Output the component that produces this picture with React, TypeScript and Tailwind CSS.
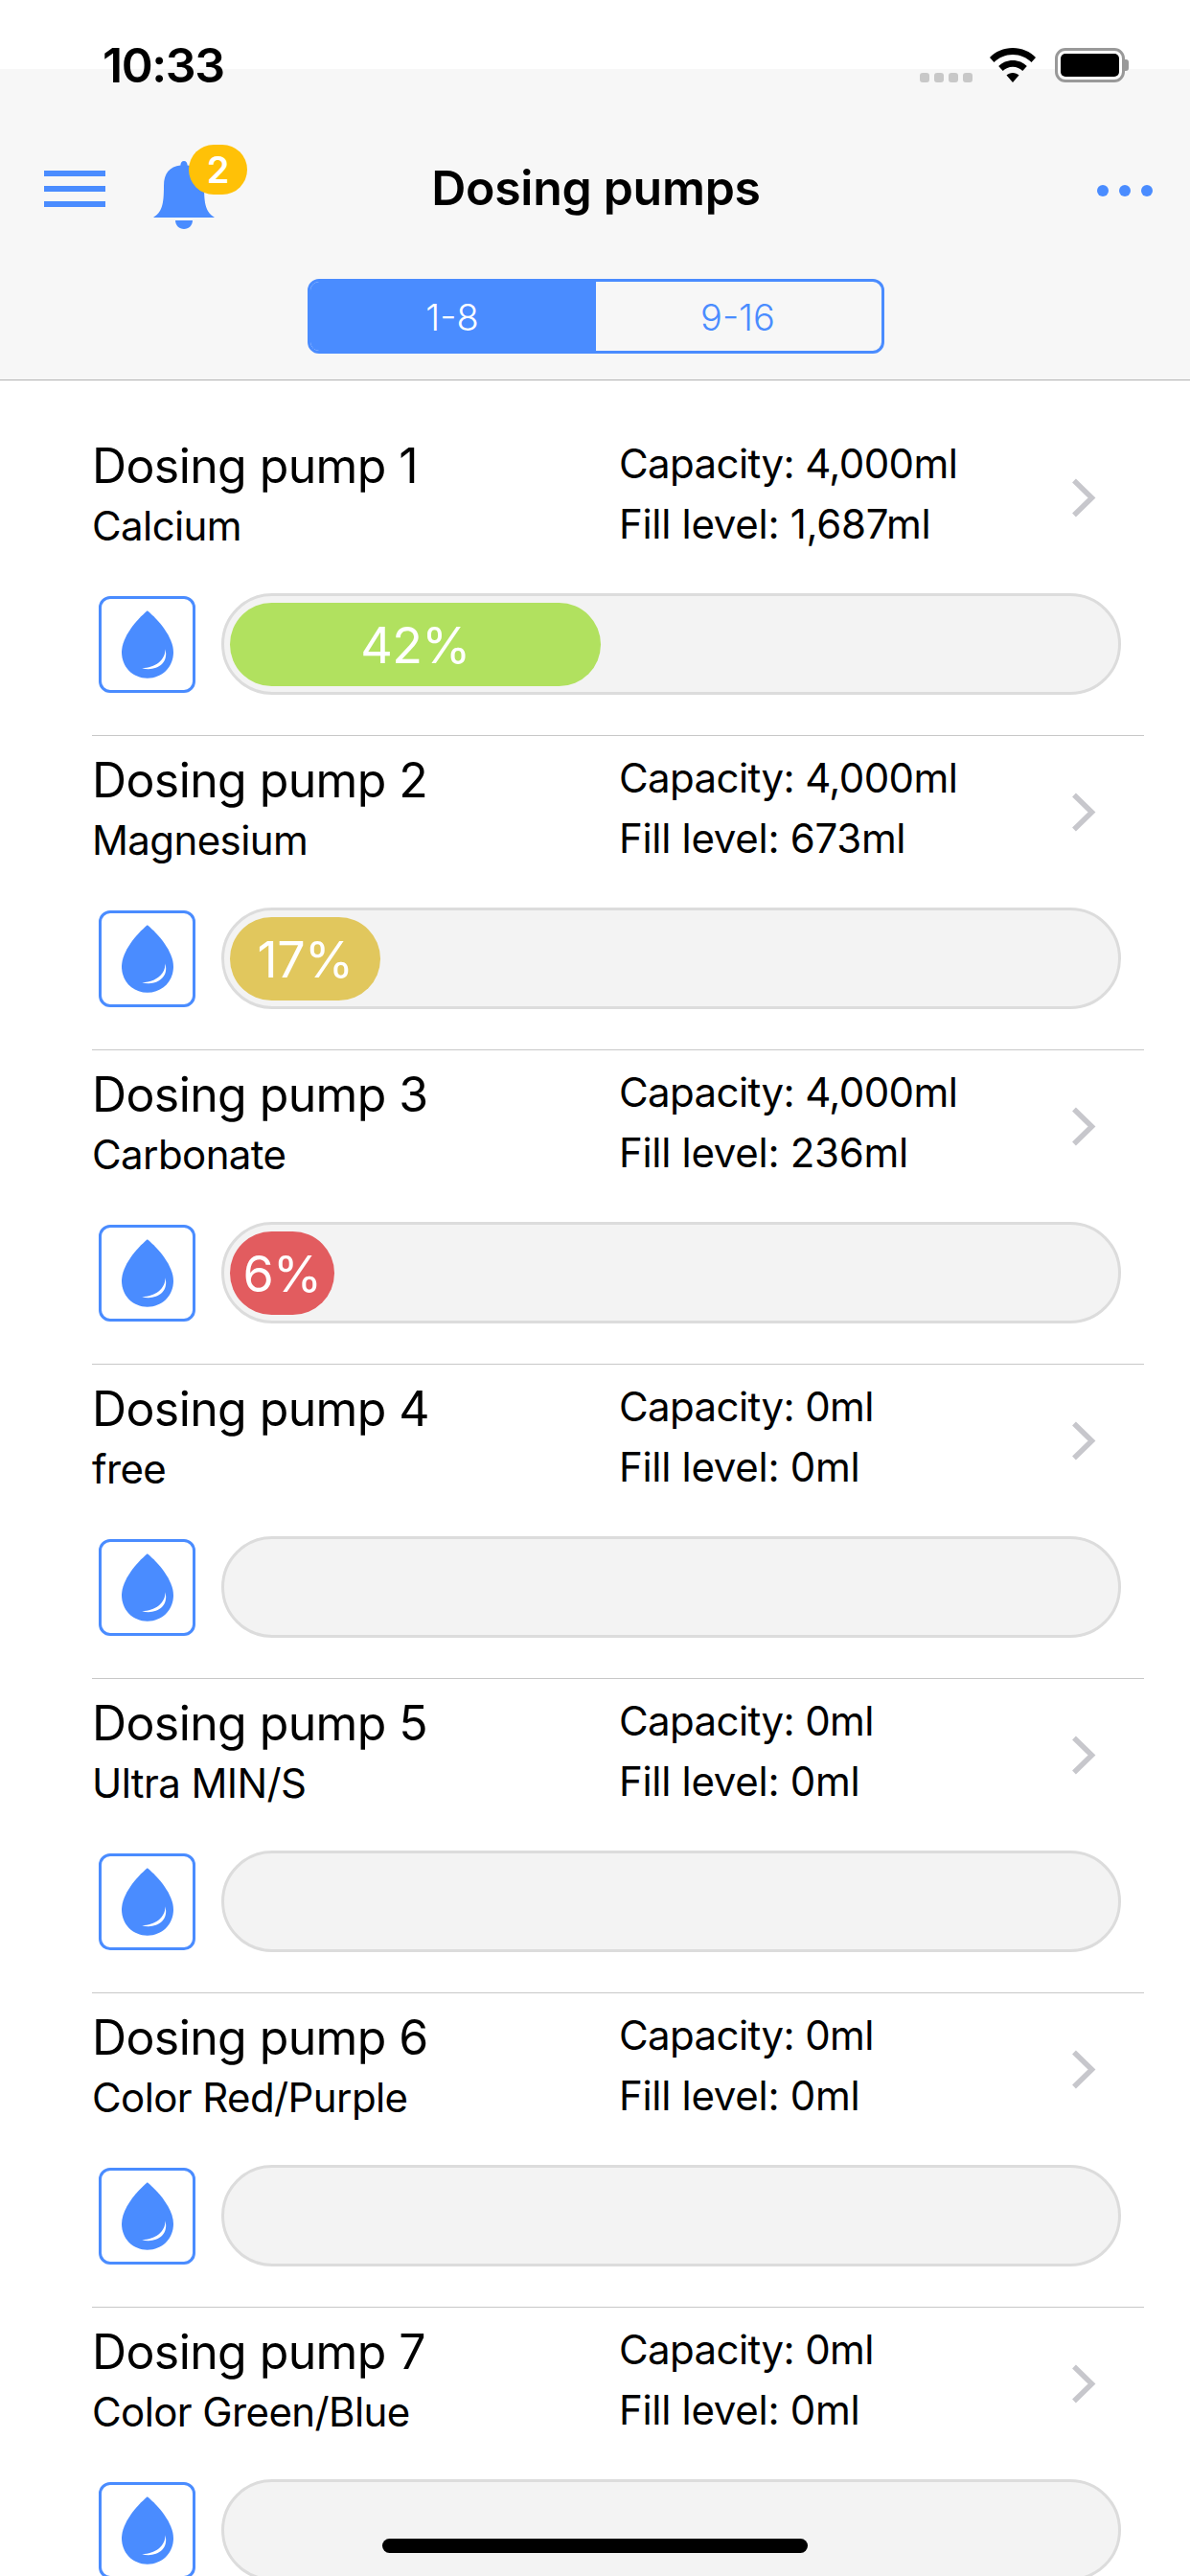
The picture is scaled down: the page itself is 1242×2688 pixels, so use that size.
import React from "react";

const pumps = [
  { n: 1, sub: "Calcium", cap: "4,000ml", fill: "1,687ml", pct: "42%", bar: "w-[387px] bg-[#b1e15f]" },
  { n: 2, sub: "Magnesium", cap: "4,000ml", fill: "673ml", pct: "17%", bar: "w-[157px] bg-[#e1c75d]" },
  { n: 3, sub: "Carbonate", cap: "4,000ml", fill: "236ml", pct: "6%", bar: "w-[109px] bg-[#e25c5f]" },
  { n: 4, sub: "free", cap: "0ml", fill: "0ml" },
  { n: 5, sub: "Ultra MIN/S", cap: "0ml", fill: "0ml" },
  { n: 6, sub: "Color Red/Purple", cap: "0ml", fill: "0ml" },
  { n: 7, sub: "Color Green/Blue", cap: "0ml", fill: "0ml" },
];

function Drop() {
  return (
    <svg width="54" height="71" viewBox="135 107 163 213">
      <path
        fill="#4a8cff"
        d="M216 107C250 135 298 190 298 238C298 285 262 320 216 320C170 320 135 285 135 238C135 190 182 135 216 107Z"
      />
      <path fill="#fff" d="M272 228C274 262 240 288 199 288C238 300 286 276 272 228Z" />
    </svg>
  );
}

function Bell() {
  return (
    <svg width="64" height="71" viewBox="0 0 64 71">
      <path
        fill="#4a8cff"
        d="M32 0C34.2 0 35.6 2 35.6 4.600C47 6 53 13 53 26C53 46 55 53 64 59L0 59C9 53 11 46 11 26C11 13 17 6 28.400 4.600C28.400 2 29.800 0 32 0Z"
      />
      <path fill="#4a8cff" d="M23 62L41 62C41 67 37 71 32 71C27 71 23 67 23 62Z" />
    </svg>
  );
}

function Wifi() {
  return (
    <svg width="48" height="36" viewBox="0 0 48 36">
      <path fill="#000" d="M24 0C33.5 0 42 3.8 48 10L43.5 15C38.5 10 31.6 7 24 7C16.4 7 9.500 10 4.500 15L0 10C6 3.800 14.500 0 24 0Z" />
      <path fill="#000" d="M24 13C29.800 13 35 15.300 38.800 19L34.300 24C31.700 21.400 28 19.800 24 19.800C20 19.800 16.300 21.400 13.700 24L9.200 19C13 15.300 18.200 13 24 13Z" />
      <path fill="#000" d="M24 26C26.500 26 28.800 27 30.500 28.600L24 36L17.500 28.600C19.200 27 21.500 26 24 26Z" />
    </svg>
  );
}

function Chevron() {
  return (
    <svg width="26" height="41" viewBox="0 0 26 41" fill="none">
      <path d="M3 2.500L21.500 20.500L3 38.500" stroke="#c7c7cc" strokeWidth="5.500" />
    </svg>
  );
}

function StatusBar() {
  return (
    <div className="relative z-10 flex h-[72px] items-start bg-white">
      <div className="ml-[107px] mt-[41px] text-[50px] font-semibold leading-[54px] tracking-[-1.4px] text-black">10:33</div>
      <div className="ml-auto mr-[64px] mt-[50px] flex items-start">
        <div className="mr-[18px] mt-[26px] flex gap-[5px]">
          <div className="h-[10px] w-[10px] rounded-[3px] bg-[#c8c8c8]" />
          <div className="h-[10px] w-[10px] rounded-[3px] bg-[#c8c8c8]" />
          <div className="h-[10px] w-[10px] rounded-[3px] bg-[#c8c8c8]" />
          <div className="h-[10px] w-[10px] rounded-[3px] bg-[#c8c8c8]" />
        </div>
        <Wifi />
        <div className="ml-[20px] flex items-center">
          <div className="h-[36px] w-[73px] rounded-[11px] border-[3px] border-[#999] bg-white p-[3px]">
            <div className="h-full w-full rounded-[5px] bg-black" />
          </div>
          <div className="h-[12px] w-[4px] rounded-r-[3px] bg-[#999]" />
        </div>
      </div>
    </div>
  );
}

function NavBar() {
  return (
    <div className="h-[325px] border-b border-[#b2b2b2] bg-[#f7f7f7]">
      <div className="relative h-[219px]">
        <div className="absolute left-0 right-0 top-[94px] pl-[2px] text-center text-[50px] font-semibold leading-[60px] tracking-[-0.3px] text-black">
          Dosing pumps
        </div>
        <div className="flex items-start">
          <div className="ml-[46px] mt-[106px] flex w-[64px] flex-col gap-[10px]">
            <div className="h-[6px] bg-[#4a8cff]" />
            <div className="h-[6px] bg-[#4a8cff]" />
            <div className="h-[6px] bg-[#4a8cff]" />
          </div>
          <div className="relative ml-[50px] mt-[96px]">
            <Bell />
            <div className="absolute left-[37px] top-[-17px] flex h-[52px] w-[61px] items-center justify-center rounded-full bg-[#ffc107] text-[38px] font-semibold leading-none text-white">
              2
            </div>
          </div>
          <div className="ml-auto mr-[39px] mt-[121px] flex gap-[11px]">
            <div className="h-[12px] w-[12px] rounded-full bg-[#4a8cff]" />
            <div className="h-[12px] w-[12px] rounded-full bg-[#4a8cff]" />
            <div className="h-[12px] w-[12px] rounded-full bg-[#4a8cff]" />
          </div>
        </div>
      </div>
      <div className="flex justify-center pl-[2px]">
        <div className="flex h-[78px] w-[602px] overflow-hidden rounded-[12px] border-[3px] border-[#4a8cff] text-[38px] font-[350] leading-none">
          <div className="flex w-1/2 items-center justify-center bg-[#4a8cff] pr-[2px] pt-[2px] text-white">1-8</div>
          <div className="flex w-1/2 items-center justify-center pr-[2px] pt-[2px] text-[#4a8cff]">9-16</div>
        </div>
      </div>
    </div>
  );
}

type Pump = (typeof pumps)[number];

function Row({ p }: { p: Pump }) {
  return (
    <div className="ml-[96px] mr-[48px] h-[328px] border-b border-[#c8c8c8]">
      <div className="flex h-[179px] items-start tracking-[-0.6px] text-black">
        <div className="w-[550px]">
          <div className="mt-[16px] text-[50px] leading-[60px]">Dosing pump {p.n}</div>
          <div className="mt-[8px] text-[42px] leading-[50px]">{p.sub}</div>
        </div>
        <div className="flex-1">
          <div className="mt-[19px] text-[42px] leading-[50px]">Capacity: {p.cap}</div>
          <div className="mt-[13px] text-[42px] leading-[50px] tracking-[-0.3px]">Fill level: {p.fill}</div>
        </div>
        <div className="mr-[50px] mt-[59px]">
          <Chevron />
        </div>
      </div>
      <div className="flex h-[106px] items-center">
        <div className="ml-[7px] flex h-[101px] w-[101px] items-center justify-center rounded-[12px] border-[3px] border-[#4a8cff] bg-white">
          <Drop />
        </div>
        <div className="ml-[27px] mr-[24px] flex h-[106px] flex-1 items-center rounded-full border-[3px] border-[#dcdcdc] bg-[#f3f3f3] px-[6px]">
          {p.pct ? (
            <div className={`flex h-[87px] items-center justify-center rounded-full pt-[3px] text-[52px] font-normal leading-none tracking-[-0.6px] text-white ${p.bar}`}>
              {p.pct}
            </div>
          ) : null}
        </div>
      </div>
    </div>
  );
}

export default function App() {
  return (
    <div
      className="relative h-[2688px] w-[1242px] overflow-hidden bg-white"
      style={{ fontFamily: "Inter, 'Liberation Sans', sans-serif" }}
    >
      <StatusBar />
      <NavBar />
      <div className="pt-[43px]">
        {pumps.map((p) => (
          <Row key={p.n} p={p} />
        ))}
      </div>
      <div className="absolute bottom-[24px] left-[399px] h-[15px] w-[444px] rounded-full bg-black" />
    </div>
  );
}
